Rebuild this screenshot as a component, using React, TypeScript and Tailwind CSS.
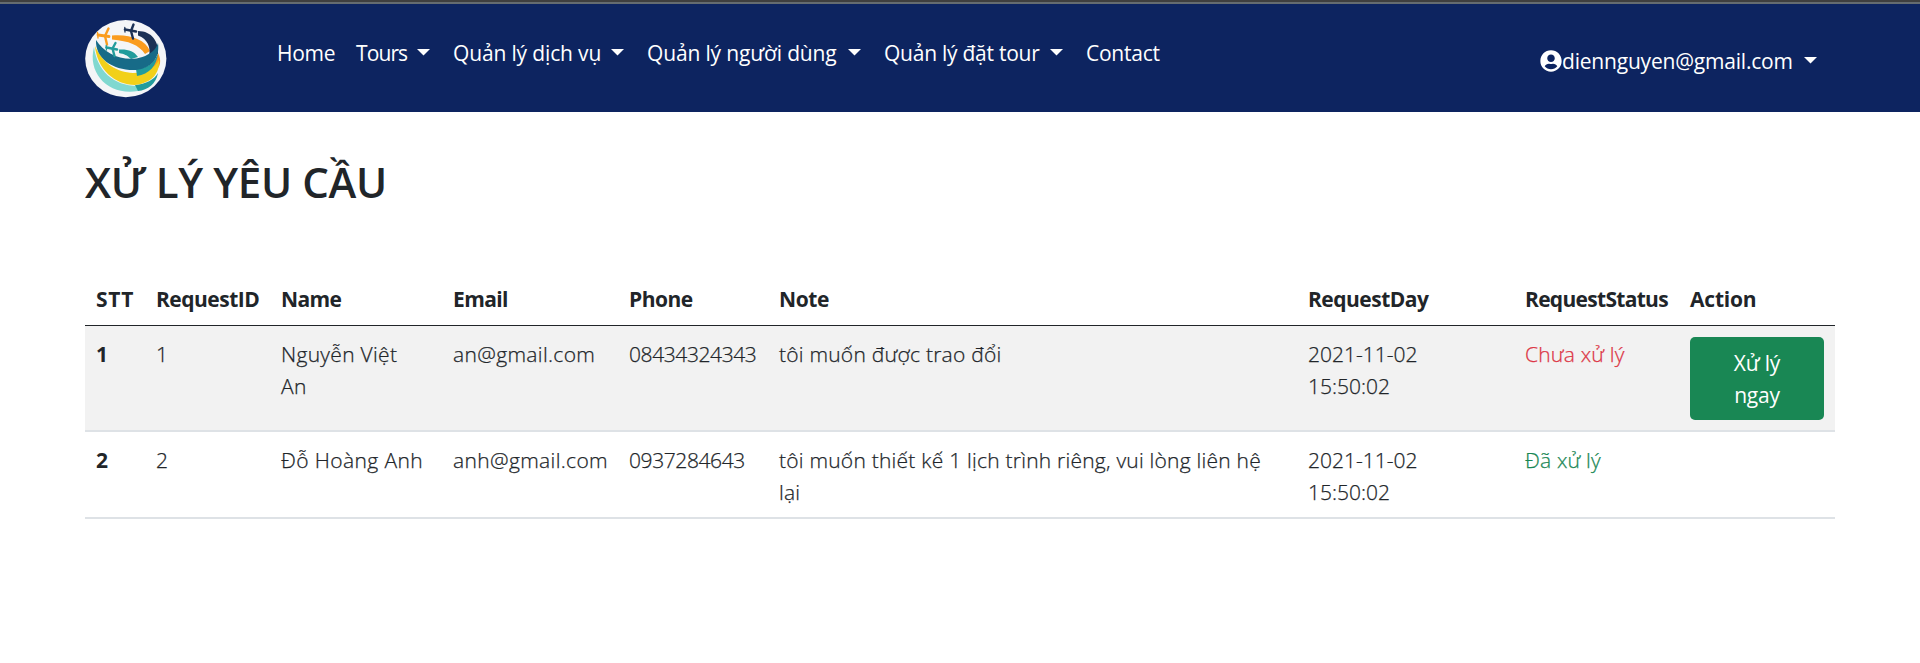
import { FaUserCircle } from "react-icons/fa";

type MenuItem = { label: string; dropdown: boolean; cell: string; text: string };

const menu: MenuItem[] = [
  { label: "Home", dropdown: false, cell: "w-[79px]", text: "tracking-[-0.3px]" },
  { label: "Tours", dropdown: true, cell: "w-[97px]", text: "tracking-[-0.9px]" },
  { label: "Quản lý dịch vụ", dropdown: true, cell: "w-[194px]", text: "tracking-[-0.15px]" },
  { label: "Quản lý người dùng", dropdown: true, cell: "w-[237px]", text: "tracking-[-0.15px]" },
  { label: "Quản lý đặt tour", dropdown: true, cell: "w-[202px]", text: "tracking-[-0.25px]" },
  { label: "Contact", dropdown: false, cell: "w-[96px]", text: "tracking-[-0.25px]" },
];

const columns = [
  { label: "STT", width: "w-[60px]", text: "tracking-[0.8px]" },
  { label: "RequestID", width: "w-[125px]", text: "tracking-[-0.5px]" },
  { label: "Name", width: "w-[172px]", text: "tracking-[-0.6px]" },
  { label: "Email", width: "w-[176px]", text: "tracking-[-0.6px]" },
  { label: "Phone", width: "w-[150px]", text: "tracking-[-0.5px]" },
  { label: "Note", width: "w-[529px]", text: "tracking-[-0.4px]" },
  { label: "RequestDay", width: "w-[217px]", text: "tracking-[-0.5px]" },
  { label: "RequestStatus", width: "w-[165px]", text: "tracking-[-0.7px]" },
  { label: "Action", width: "w-[156px]", text: "tracking-[-0.2px]" },
];

const requests = [
  {
    id: 1,
    name: "Nguyễn Việt An",
    email: "an@gmail.com",
    phone: "08434324343",
    note: "tôi muốn được trao đổi",
    day: "2021-11-02 15:50:02",
    done: false,
  },
  {
    id: 2,
    name: "Đỗ Hoàng Anh",
    email: "anh@gmail.com",
    phone: "0937284643",
    note: "tôi muốn thiết kế 1 lịch trình riêng, vui lòng liên hệ lại",
    day: "2021-11-02 15:50:02",
    done: true,
  },
];

function Caret() {
  return (
    <svg className="h-[7px] w-[13px] shrink-0" viewBox="0 0 13 7" fill="currentColor">
      <path d="M0 0H13L6.5 6.6Z" />
    </svg>
  );
}

function Logo() {
  return (
    <svg className="h-[78px] w-[82px]" viewBox="0 0 82 78">
      <ellipse cx="40.8" cy="38.7" rx="40.6" ry="38.6" fill="#f4f5f7" />
      <path d="M27 15.5C44 14 60 19 65 31L60 34C54 25 44 21 27 19.5Z" fill="#fa9c1e" />
      <path d="M53 11C67 11 74 22 73 34L64 36C66 28 63 19 53 15.5Z" fill="#1c3155" />
      <path d="M34 29.5C43 29 49 31 53 37L46 39C42 35 39 34 34 33Z" fill="#229c9c" />
      <path d="M73 33C77 41 75 47 71 50L60 52C66 47 71 41 73 33Z" fill="#fa9c1e" />
      <path d="M9 27C12 50 28 66 53 66V71C24 76 2 54 9 27Z" fill="#80d8d0" />
      <path d="M50 65C61 64 69 60 73 53C71 64 63 70 53 71Z" fill="#229c9c" />
      <path d="M10 26C18 44 32 52 48 53C60 53 70 48 74 40C75 53 67 63 50 65C30 65 12 49 10 26Z" fill="#f2d019" />
      <path d="M51 49C64 48 70 42 73 33C72 46 64 54 52 56Z" fill="#229c9c" />
      <path d="M11 20C22 38 50 46 68 31C71 28 72 26 73 23C75 38 67 48 51 50C29 51 10 39 11 20Z" fill="#176b88" />
      <g fill="none" strokeLinecap="round" strokeLinejoin="round">
        <g stroke="#fa9c1e">
          <path d="M13 15L24 16.5" strokeWidth="2.8" />
          <path d="M23.5 8.5L20 16L22 24.5" strokeWidth="2.4" />
          <path d="M12.5 12.5L13 18" strokeWidth="1.4" />
        </g>
        <g stroke="#1c3155">
          <path d="M40 9.5L51 11.5" strokeWidth="2.6" />
          <path d="M48.5 4.5L46 11L48 18.5" strokeWidth="2.4" />
          <path d="M39.8 7.5L40 12" strokeWidth="1.3" />
        </g>
        <g stroke="#229c9c">
          <path d="M21.5 27.5L32 29.5" strokeWidth="2.6" />
          <path d="M30.5 23L27.5 28.5L29.5 36" strokeWidth="2.4" />
          <path d="M21.2 25.5L21.5 30" strokeWidth="1.3" />
        </g>
      </g>
    </svg>
  );
}

export default function App() {
  return (
    <div className="min-h-[663px] w-[1920px] bg-white font-['Open_Sans','Noto_Sans',sans-serif] text-[21px] leading-8 text-[#212529]">
      <div className="h-[2px] bg-[#3f3f3f]" />
      <div className="h-[2px] bg-[#656c70]" />
      <header className="flex h-[108px] items-start bg-[#0d2460] pl-[85px] pr-[103px] text-white">
        <div className="mt-4 w-[192px]">
          <Logo />
        </div>
        <nav className="mt-[33px] flex whitespace-nowrap">
          {menu.map((item) => (
            <a key={item.label} className={`flex items-center justify-between pr-[23px] ${item.cell}`}>
              <span className={item.text}>{item.label}</span>
              {item.dropdown && (
                <span className="pb-[2px]">
                  <Caret />
                </span>
              )}
            </a>
          ))}
        </nav>
        <a className="ml-auto mt-[41px] flex h-8 w-[277px] items-center">
          <FaUserCircle className="size-[22px] shrink-0" />
          <span className="tracking-[-0.2px]">diennguyen@gmail.com</span>
          <span className="ml-auto flex pb-[2px]">
            <Caret />
          </span>
        </a>
      </header>

      <main className="px-[85px]">
        <h1 className="pt-[38px] text-[42px] font-semibold leading-[64px] tracking-[-0.35px]">XỬ LÝ YÊU CẦU</h1>
        <table className="mt-[57px] w-[1750px] table-fixed border-separate border-spacing-0 text-left">
          <thead>
            <tr className="h-[55px]">
              {columns.map((c) => (
                <th
                  key={c.label}
                  className={`border-b border-[#212529] px-[11px] pt-[2px] font-bold ${c.width} ${c.text}`}
                >
                  {c.label}
                </th>
              ))}
            </tr>
          </thead>
          <tbody>
            {requests.map((r) => (
              <tr
                key={r.id}
                className={`align-top [&>*]:border-b-2 [&>*]:border-[#dee2e6] [&>*]:px-[11px] [&>td]:font-light [&>td]:tracking-[0.16px] [&>td]:[-webkit-text-stroke:0.25px] ${r.done ? "h-[87px] [&>*]:pt-[12px]" : "h-[106px] bg-[#f2f2f2] [&>*]:pt-[12px]"}`}
              >
                <th className="font-bold">{r.id}</th>
                <td>{r.id}</td>
                <td>
                  <div className={r.done ? "whitespace-nowrap tracking-[0.4px]" : "w-[132px] tracking-[0.3px]"}>{r.name}</div>
                </td>
                <td>
                  <div className="tracking-[0.35px]">{r.email}</div>
                </td>
                <td>
                  <div className="tracking-[-0.4px]">{r.phone}</div>
                </td>
                <td>
                  <div className="w-[490px] tracking-[0.23px]">{r.note}</div>
                </td>
                <td>
                  <div className="w-[140px] tracking-normal">{r.day}</div>
                </td>
                <td className={r.done ? "text-[#198754]" : "text-[#dc3545]"}>{r.done ? "Đã xử lý" : "Chưa xử lý"}</td>
                <td>
                  {!r.done && (
                    <button className="-mt-px flex h-[83px] w-[134px] items-center justify-center rounded-[5px] bg-[#198754] px-8 font-normal tracking-[-0.2px] text-white [-webkit-text-stroke:0px]">
                      Xử lý ngay
                    </button>
                  )}
                </td>
              </tr>
            ))}
          </tbody>
        </table>
      </main>
    </div>
  );
}
